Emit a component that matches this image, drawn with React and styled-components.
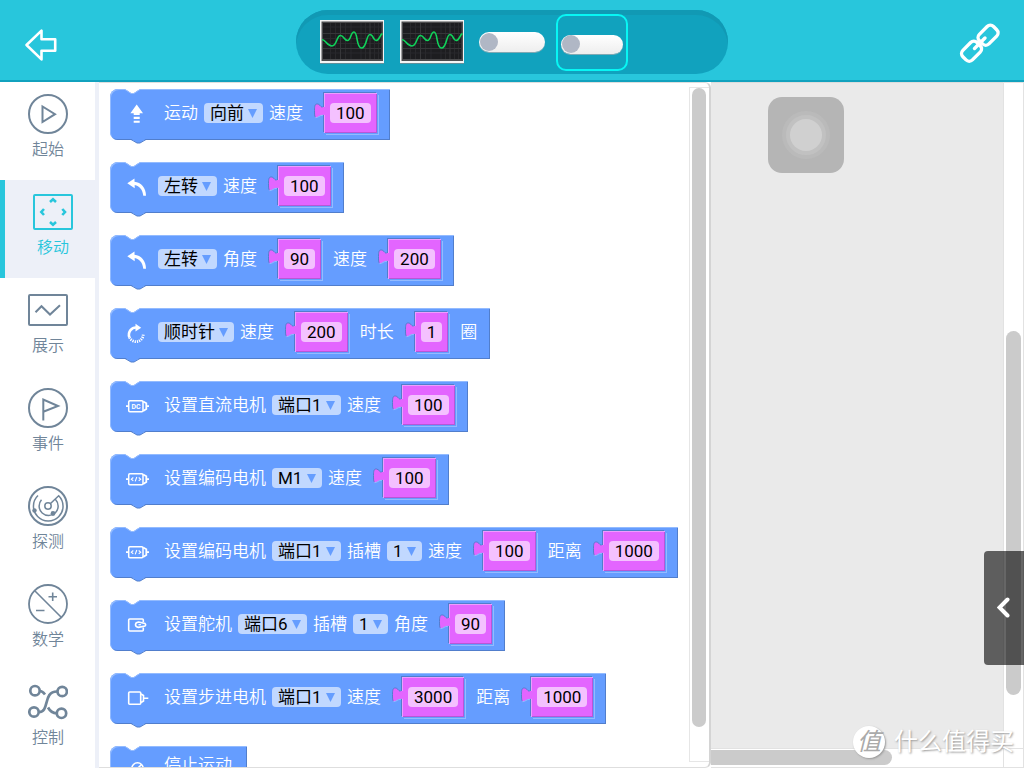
import React, { useState } from 'react';
import styled, { createGlobalStyle } from 'styled-components';

const TEAL = '#28c6dc';
const TEAL_DARK = '#11a2be';
const SLATE = '#708599';
const BLUE = '#659dff';
const BLUE_LIGHT = '#93bbff';
const BLUE_DARK = '#517ecc';
const PINK = '#e365ff';

const CATEGORIES = [
	{ id: 'start', name: '起始', Icon: StartIcon },
	{ id: 'move', name: '移动', Icon: MoveIcon },
	{ id: 'show', name: '展示', Icon: ShowIcon },
	{ id: 'event', name: '事件', Icon: EventIcon },
	{ id: 'detect', name: '探测', Icon: DetectIcon },
	{ id: 'math', name: '数学', Icon: MathIcon },
	{ id: 'control', name: '控制', Icon: ControlIcon },
];

const PORTS = ['端口1', '端口2', '端口3', '端口4', '端口5', '端口6'];
const SLOTS = ['1', '2'];

const text = (value) => ({ type: 'text', value });
const pick = (value, options) => ({ type: 'pick', value, options });
const num = (value) => ({ type: 'num', value });

const BLOCKS = [
	{ Icon: ForwardIcon, parts: [text('运动'), pick('向前', ['向前', '向后']), text('速度'), num('100')] },
	{ Icon: TurnIcon, parts: [pick('左转', ['左转', '右转']), text('速度'), num('100')] },
	{
		Icon: TurnIcon,
		parts: [pick('左转', ['左转', '右转']), text('角度'), num('90'), text('速度'), num('200')],
	},
	{
		Icon: ClockwiseIcon,
		parts: [
			pick('顺时针', ['顺时针', '逆时针']),
			text('速度'),
			num('200'),
			text('时长'),
			num('1'),
			text('圈'),
		],
	},
	{ Icon: DcMotorIcon, parts: [text('设置直流电机'), pick('端口1', PORTS), text('速度'), num('100')] },
	{
		Icon: EncoderIcon,
		parts: [text('设置编码电机'), pick('M1', ['M1', 'M2']), text('速度'), num('100')],
	},
	{
		Icon: EncoderIcon,
		parts: [
			text('设置编码电机'),
			pick('端口1', PORTS),
			text('插槽'),
			pick('1', SLOTS),
			text('速度'),
			num('100'),
			text('距离'),
			num('1000'),
		],
	},
	{
		Icon: ServoIcon,
		parts: [text('设置舵机'), pick('端口6', PORTS), text('插槽'), pick('1', SLOTS), text('角度'), num('90')],
	},
	{
		Icon: StepperIcon,
		parts: [
			text('设置步进电机'),
			pick('端口1', PORTS),
			text('速度'),
			num('3000'),
			text('距离'),
			num('1000'),
		],
	},
	{ Icon: StopIcon, parts: [text('停止运动')] },
];

export default function App() {
	const [active, setActive] = useState('move');

	return (
		<Page>
			<GlobalStyle />
			<Header>
				<BackButton aria-label='返回'>
					<BackIcon />
				</BackButton>
				<Dock>
					<ScreenButton aria-label='示波器 1'>
						<ScopeIcon />
					</ScreenButton>
					<ScreenButton aria-label='示波器 2'>
						<ScopeIcon />
					</ScreenButton>
					<Slot>
						<Toggle type='checkbox' aria-label='开关 1' />
					</Slot>
					<Slot $selected>
						<Toggle type='checkbox' aria-label='开关 2' $small />
					</Slot>
				</Dock>
				<LinkButton aria-label='连接'>
					<LinkIcon />
				</LinkButton>
			</Header>

			<Main>
				<Sidebar>
					{CATEGORIES.map(({ id, name, Icon }) => (
						<Category key={id} $active={id === active} onClick={() => setActive(id)}>
							<CategoryInner>
								<Icon />
								<span>{name}</span>
							</CategoryInner>
						</Category>
					))}
				</Sidebar>

				<Palette>
					<BlockList>
						{BLOCKS.map((block, index) => (
							<Block key={index} {...block} />
						))}
					</BlockList>
					<PaletteTrack $start={0} $size={639} $rest={34}>
						<Thumb />
					</PaletteTrack>
				</Palette>

				<Workspace>
					<Canvas>
						<Joystick>
							<Ring>
								<Knob />
							</Ring>
						</Joystick>
					</Canvas>
					<VerticalTrack $start={248} $size={364} $rest={53}>
						<Thumb />
					</VerticalTrack>
					<HorizontalTrack>
						<WideThumb />
					</HorizontalTrack>
					<Corner />
					<Drawer aria-label='展开'>
						<ChevronIcon />
					</Drawer>
					<Watermark>
						<Badge>值</Badge>
						<span>什么值得买</span>
					</Watermark>
				</Workspace>
			</Main>
		</Page>
	);
}

function Block({ Icon, parts }) {
	return (
		<BlockBody $plain={parts.length === 1}>
			<Notch viewBox='0 0 15 5'>
				<path d='M0 0 L6 4 H9 L15 0 Z' fill='#fff' />
				<path d='M0 0.5 L6 4.5 H9 L15 0.5' fill='none' stroke={BLUE_LIGHT} />
			</Notch>
			<BlockIcon viewBox='0 0 32 30'>
				<Icon />
			</BlockIcon>
			{parts.map((part, index) => {
				if (part.type === 'text') {
					return (
						<Label key={index} $first={index === 0}>
							{part.value}
						</Label>
					);
				}
				if (part.type === 'pick') {
					return <Dropdown key={index} {...part} />;
				}
				return <NumberField key={index} value={part.value} />;
			})}
			<Tab viewBox='0 0 15 5'>
				<path d='M0 0 L6 4 H9 L15 0 Z' fill={BLUE} />
				<path d='M0 0.5 L6 4 H9 L15 0.5' fill='none' stroke={BLUE_DARK} />
			</Tab>
		</BlockBody>
	);
}

function Dropdown({ value, options }) {
	return (
		<Picker>
			<Select defaultValue={value} aria-label={value}>
				{options.map((option) => (
					<option key={option}>{option}</option>
				))}
			</Select>
			<Caret viewBox='0 0 9 9'>
				<path d='M0 0 H9 L4.5 9 Z' fill={BLUE} />
			</Caret>
		</Picker>
	);
}

function NumberField({ value }) {
	const [current, setCurrent] = useState(value);
	return (
		<Socket>
			<Plug viewBox='0 0 12 18'>
				<path
					d='M11 5 C8 6.5 7 2.2 4.500 2 C1.800 1.800 1.500 4 1.500 8.500 C1.500 13 1.500 15.500 3 15.500 C5.500 15.500 6.500 12.800 11 12.800'
					fill={PINK}
				/>
				<path
					d='M10 5 C8 6 7 2.2 4.500 2 C1.800 1.800 1.500 4 1.500 8.500 C1.500 12 1.500 14.500 2.500 15.200'
					fill='none'
					stroke={BLUE_DARK}
				/>
				<path d='M2.500 15.700 C5.500 15.700 6.500 13.200 10 13.200' fill='none' stroke={BLUE_LIGHT} />
				<path d='M9.500 5 H12 V12.800 H9.500 Z' fill={PINK} />
			</Plug>
			<NumberInput
				$chars={current.length}
				value={current}
				aria-label='数值'
				onChange={(e) => setCurrent(e.target.value)}
			/>
		</Socket>
	);
}

/* header icons */

function BackIcon() {
	return (
		<svg width='34' height='34' viewBox='0 0 34 34' fill='none' stroke='#fff' strokeWidth='2.6' strokeLinejoin='round'>
			<path d='M2.5 17 L17.5 2.6 V11.3 H31.2 V22.7 H17.5 V31.4 Z' />
		</svg>
	);
}

function LinkIcon() {
	return (
		<svg width='42' height='42' viewBox='0 0 42 42' fill='none' stroke='#fff' strokeWidth='3.400' strokeLinecap='round'>
			<rect x='20' y='7.500' width='20' height='13.500' rx='4.500' transform='rotate(-45 30 14.200)' />
			<rect x='3.500' y='23.500' width='20' height='13.500' rx='4.500' transform='rotate(-45 13.500 30.200)' />
			<path d='M27 17 L23.500 20.500 M20 24 L16.500 27.500' />
		</svg>
	);
}

function ScopeIcon() {
	return (
		<svg width='64' height='44' viewBox='0 0 64 44'>
			<rect y='1' width='64' height='43' fill='#5f8f9b' />
			<rect width='64' height='43' fill='#f4f4f4' />
			<rect x='1.5' y='1.5' width='61.5' height='39.5' fill='#4c4c4e' />
			<rect x='3' y='3' width='58.5' height='36' fill='#1d1d20' />
			<path
				d='M10.5 3 V39 M15.5 3 V39 M25.5 3 V39 M31 3 V39 M41 3 V39 M45.5 3 V39 M54.5 3 V39 M58.5 3 V39 M3 7 H61 M3 18.5 H61 M3 23.5 H61 M3 33 H61'
				stroke='#29292c'
				fill='none'
			/>
			<path d='M20.5 3 V39 M50 3 V39 M3 13.5 H61 M3 28.5 H61' stroke='#363639' fill='none' />
			<path
				d='M2 19.5 C6 20 7 26 12 26 C17 26 16.5 15.5 20.5 15.5 C24 15.5 24 20.5 27.5 20.5 C31 20.5 30.5 12 34 12 C38 12 36 28 41.5 28 C47 28 46 14.5 50 14.5 C53.500 14.500 53 20.5 56 20.5 C59.500 20.500 59.500 15 62.500 13.500'
				stroke='#10d35a'
				strokeWidth='1.6'
				fill='none'
			/>
		</svg>
	);
}

/* sidebar icons */

function SidebarSvg({ children }) {
	return (
		<svg
			width='40'
			height='40'
			viewBox='0 0 40 40'
			fill='none'
			stroke='currentColor'
			strokeWidth='2'
			aria-hidden='true'
		>
			{children}
		</svg>
	);
}

function StartIcon() {
	return (
		<SidebarSvg>
			<circle cx='20' cy='20' r='19' />
			<path d='M14.5 12.500 V28 L27 20.200 Z' />
		</SidebarSvg>
	);
}

function MoveIcon() {
	return (
		<SidebarSvg>
			<rect x='1' y='3' width='38' height='34' rx='1' />
			<path
				d='M17 10 L20 7.300 L23 10 M17 30 L20 32.700 L23 30 M11 17 L8.300 20 L11 23 M29.300 17 L32 20 L29.300 23'
				strokeWidth='2.600'
			/>
		</SidebarSvg>
	);
}

function ShowIcon() {
	return (
		<SidebarSvg>
			<rect x='1' y='5' width='38' height='30' rx='1' />
			<path d='M7.500 22.300 L13.500 16.200 L22 24.500 L32 15.200' />
		</SidebarSvg>
	);
}

function EventIcon() {
	return (
		<SidebarSvg>
			<circle cx='20' cy='20' r='19' />
			<path d='M15.300 32.500 V11.500 L30 18 L15.300 23.800' />
		</SidebarSvg>
	);
}

function DetectIcon() {
	return (
		<SidebarSvg>
			<circle cx='20' cy='20' r='19' />
			<circle cx='20' cy='20' r='3.200' strokeWidth='1.500' />
			<path
				d='M22.500 17.500 L30.700 9.700 A14.800 14.800 0 1 1 10 9.500 M27.500 13.500 A9.500 9.500 0 1 1 13.500 13.800'
				strokeWidth='1.500'
			/>
			<circle cx='6.500' cy='24.500' r='2.200' fill='currentColor' stroke='none' />
			<circle cx='25' cy='27.500' r='2.400' fill='currentColor' stroke='none' />
		</SidebarSvg>
	);
}

function MathIcon() {
	return (
		<SidebarSvg>
			<circle cx='20' cy='20' r='19' strokeWidth='1.800' />
			<path d='M6.500 6.500 L33.500 33.500 M24.700 8.500 V17 M20.500 12.700 H29 M8 26.500 H16.500' strokeWidth='1.600' />
		</SidebarSvg>
	);
}

function ControlIcon() {
	return (
		<SidebarSvg>
			<g strokeWidth='2.700'>
				<circle cx='7' cy='8.700' r='4.700' />
				<circle cx='34.200' cy='9.500' r='4.700' />
				<circle cx='6' cy='30' r='4.700' />
				<circle cx='33.500' cy='31.300' r='4.700' />
				<path d='M11 30 C22 30 14.500 9.500 29 9.500 M12 9 C14.500 9 15.500 10.500 17 12.500 M20 25.500 C22 29 24 31.300 28.500 31.300' />
			</g>
		</SidebarSvg>
	);
}

/* block icons, all drawn on a 32x30 board */

function ForwardIcon() {
	return (
		<path
			d='M16.700 6.500 L23 15.200 H19.700 V17 H13.700 V15.200 H10.400 Z M13.700 18.700 H19.700 V21 H13.700 Z M13.700 22.700 H19.700 V24.800 H13.700 Z'
			fill='#fff'
		/>
	);
}

function TurnIcon() {
	return (
		<path
			d='M7.300 12.300 L14.500 7.500 V10.700 C21 11.500 26 16.500 26 24.700 H23.300 C22.500 18.500 19.500 15 14.700 14 V17.200 Z'
			fill='#fff'
		/>
	);
}

function ClockwiseIcon() {
	return (
		<g fill='none' stroke='#fff'>
			<path d='M9.500 20.500 A7.200 7.200 0 0 1 17.500 10.600' strokeWidth='2.600' />
			<path d='M9.500 20.500 A7.200 7.200 0 0 0 23.200 17' strokeWidth='2.800' strokeDasharray='1.200 1' />
			<path d='M15.500 6.700 L21.200 10.700 L15.500 14.500 Z' fill='#fff' stroke='none' />
		</g>
	);
}

function MotorShell({ children }) {
	return (
		<g fill='none' stroke='#fff' strokeWidth='1.500'>
			<rect x='8.700' y='10.700' width='14.300' height='11' rx='1.200' />
			<path d='M6 16.200 H8.500 M26.500 16.200 H29 M23.200 11.500 L26.300 13.300 V19 L23.200 21' strokeWidth='1.800' />
			{children}
		</g>
	);
}

function DcMotorIcon() {
	return (
		<MotorShell>
			<text x='16' y='18.700' textAnchor='middle' fontSize='7' fontWeight='700' fill='#fff' stroke='none'>
				DC
			</text>
		</MotorShell>
	);
}

function EncoderIcon() {
	return (
		<MotorShell>
			<path d='M13.300 14.500 L11.300 16.200 L13.300 17.900 M18.700 14.500 L20.700 16.200 L18.700 17.900 M16.800 14 L15.200 18.400' strokeWidth='1.100' />
		</MotorShell>
	);
}

function ServoIcon() {
	return (
		<g fill='none' stroke='#fff' strokeWidth='1.600'>
			<path d='M23.300 13 V11 Q23.300 10 22.300 10 H9.700 Q8.700 10 8.700 11 V21 Q8.700 22 9.700 22 H22.300 Q23.300 22 23.300 21 V18.500' />
			<path d='M18.500 13 L25 14.500 Q26.300 15.800 25 17 L18.500 18.400 Q15.500 18 15.500 15.700 Q15.500 13.400 18.500 13 Z' />
			<path d='M18.500 15.700 H21' strokeWidth='1.200' />
		</g>
	);
}

function StepperIcon() {
	return (
		<g fill='none' stroke='#fff' strokeWidth='1.600'>
			<rect x='8.700' y='10' width='12' height='12.300' rx='1' />
			<path d='M21 12 L23.500 13.500 V19 L21 20.500 M24 16.200 H28.300' />
		</g>
	);
}

function StopIcon() {
	return (
		<g fill='none' stroke='#fff' strokeWidth='1.600'>
			<circle cx='17.500' cy='18.500' r='5.700' />
			<path d='M13.700 22.300 L21.300 14.700' />
		</g>
	);
}

function ChevronIcon() {
	return (
		<svg width='14' height='22' viewBox='0 0 14 22' fill='none' stroke='#fff' strokeWidth='4' strokeLinecap='round'>
			<path d='M10.500 2.500 L2.500 10.500 L10.500 18.500' />
		</svg>
	);
}

const GlobalStyle = createGlobalStyle`
	*,
	*::before,
	*::after {
		box-sizing: border-box;
	}

	body {
		margin: 0;
		background: #fff;
		font-family: Roboto, 'Noto Sans CJK SC', sans-serif;
	}

	button,
	input,
	select {
		font: inherit;
		color: inherit;
		margin: 0;
		padding: 0;
		border: 0;
		background: none;
	}
`;

const Page = styled.div`
	height: 100vh;
	display: flex;
	flex-direction: column;
	overflow: hidden;
`;

const Header = styled.header`
	display: grid;
	grid-template-columns: 1fr minmax(0, 432px) 1fr;
	align-items: center;
	flex: none;
	padding: 10px 24px 6px;
	background: ${TEAL};
	border-bottom: 2px solid ${TEAL_DARK};
`;

const HeaderButton = styled.button`
	display: flex;
	cursor: pointer;
`;

const BackButton = styled(HeaderButton)`
	justify-self: start;
	padding-top: 6px;
`;

const LinkButton = styled(HeaderButton)`
	justify-self: end;
`;

const Dock = styled.div`
	display: flex;
	align-items: center;
	gap: 16px;
	height: 64px;
	padding: 0 24px;
	border-radius: 32px;
	background: ${TEAL_DARK};
	box-shadow: inset 0 5px 0 #1199b4;
`;

const ScreenButton = styled.button`
	display: flex;
	cursor: pointer;
`;

const Slot = styled.span`
	display: flex;
	align-items: center;
	justify-content: center;
	height: 57px;
	width: ${({ $selected }) => ($selected ? '72px' : '64px')};
	margin-left: ${({ $selected }) => ($selected ? '-4px' : '0')};
	padding-top: ${({ $selected }) => ($selected ? '4px' : '0')};
	border: ${({ $selected }) => ($selected ? '2px solid #08f6f4' : '0')};
	border-radius: 10px;
`;

const Toggle = styled.input`
	appearance: none;
	display: flex;
	align-items: center;
	flex: none;
	width: ${({ $small }) => ($small ? '62px' : '66px')};
	height: ${({ $small }) => ($small ? '19px' : '20px')};
	border-radius: 10px;
	background: linear-gradient(#fff, #eee);
	box-shadow: 0 1px 0 #7fa9b4;
	cursor: pointer;

	&::before {
		content: '';
		width: 18px;
		height: 18px;
		margin: 0 1px;
		border-radius: 50%;
		background: #b0b7c5;
	}

	&:checked {
		justify-content: flex-end;
	}
`;

const Main = styled.main`
	flex: 1;
	min-height: 0;
	display: grid;
	grid-template-columns: 99px minmax(0, 612fr) minmax(0, 313fr);
`;

const Sidebar = styled.nav`
	border-right: 4px solid #edf0f8;
	overflow: hidden;
`;

const Category = styled.button`
	display: block;
	width: 100%;
	height: 98px;
	padding: 12px 0 0 28px;
	border-left: ${({ $active }) => ($active ? `5px solid ${TEAL}` : '0')};
	background: ${({ $active }) => ($active ? '#edf0f8' : '#fff')};
	color: ${({ $active }) => ($active ? TEAL : SLATE)};
	font-size: 16px;
	font-weight: 350;
	line-height: 20px;
	cursor: pointer;
`;

const CategoryInner = styled.span`
	display: flex;
	flex-direction: column;
	align-items: center;
	gap: 6px;
	width: 40px;
	height: 86px;
`;

const Palette = styled.section`
	display: flex;
	min-height: 0;
	background: #fff;
	border: 1px solid #dedede;
	border-left: 0;
	border-right: 2px solid #d4d4d4;
	border-radius: 0 6px 6px 0;
`;

const BlockList = styled.div`
	flex: 1;
	min-width: 0;
	display: flex;
	flex-direction: column;
	align-items: flex-start;
	gap: 22px;
	padding: 6px 0 0 11px;
	overflow: hidden;
`;

const BlockBody = styled.div`
	position: relative;
	display: flex;
	align-items: center;
	gap: 6px;
	flex: none;
	padding: ${({ $plain }) => ($plain ? '4px 15px 8px 10px' : '4px 13px 7px 10px')};
	border-radius: 8px 0 0 8px;
	background: ${BLUE};
	box-shadow: inset 1px 1px 0 ${BLUE_LIGHT}, inset -1px -1px 0 ${BLUE_DARK};
	color: #fff;
	font-size: 17px;
	line-height: 20px;
	white-space: nowrap;
`;

const Notch = styled.svg`
	position: absolute;
	left: 15px;
	top: 0;
	width: 15px;
	height: 5px;
`;

const Tab = styled.svg`
	position: absolute;
	left: 15px;
	top: calc(100% - 1px);
	width: 15px;
	height: 5px;
`;

const BlockIcon = styled.svg`
	width: 32px;
	height: 30px;
`;

const Label = styled.span`
	margin-left: ${({ $first }) => ($first ? '6px' : '0')};
	font-weight: 350;
`;

const Picker = styled.span`
	display: inline-grid;
	align-items: center;
	border-radius: 4px;
	background: #c1d8ff;
	color: #000;

	> * {
		grid-area: 1 / 1;
	}
`;

const Select = styled.select`
	appearance: none;
	height: 20px;
	padding: 0 19px 0 6px;
	line-height: 20px;
	cursor: pointer;
`;

const Caret = styled.svg`
	justify-self: end;
	width: 9px;
	height: 9px;
	margin-right: 6px;
	pointer-events: none;
`;

const Socket = styled.span`
	position: relative;
	display: flex;
	margin-left: 15px;
	padding: 10px 6px;
	background: ${PINK};
	box-shadow: inset 1px 1px 0 #ee9dff, inset -1px -1px 0 #b857d6, 1px 1px 0 ${BLUE}, 2px 2px 0 ${BLUE_LIGHT},
		-1px -1px 0 ${BLUE_DARK};

	& + * {
		margin-left: 6px;
	}
`;

const Plug = styled.svg`
	position: absolute;
	left: -11px;
	top: 9px;
	width: 12px;
	height: 18px;
`;

const NumberInput = styled.input`
	width: calc(${({ $chars }) => $chars}ch + 12px);
	height: 20px;
	border-radius: 4px;
	background: #f4c1ff;
	color: #000;
	line-height: 20px;
	text-align: center;
`;

const Track = styled.div`
	display: grid;
	grid-template-rows: ${({ $start, $size, $rest }) => `${$start}fr ${$size}fr ${$rest}fr`};
	background: #fff;
`;

const PaletteTrack = styled(Track)`
	flex: none;
	width: 20px;
	margin: 4px 0 5px;
	padding: 0 3px 0 2px;
	border: 1px solid #e6e6e6;
	border-right: 0;
`;

const VerticalTrack = styled(Track)`
	padding: 0 2px;
	border: 1px solid #e2e2e2;
	border-bottom: 0;
`;

const Thumb = styled.div`
	grid-row: 2;
	border-radius: 8px;
	background: #cbcbcb;
`;

const Workspace = styled.section`
	position: relative;
	display: grid;
	grid-template-columns: minmax(0, 1fr) 21px;
	grid-template-rows: minmax(0, 1fr) 20px;
	background: #fff;
`;

const Canvas = styled.div`
	padding: 14px 57px;
	background: #eaeaea;
	border-top: 1px solid #dcdcdc;
`;

const Joystick = styled.div`
	display: grid;
	place-items: center;
	width: 76px;
	height: 76px;
	border-radius: 14px;
	background: #b5b5b5;
`;

const Ring = styled.div`
	display: grid;
	place-items: center;
	width: 48px;
	height: 48px;
	border: 4px solid #bababa;
	border-radius: 50%;
	background: #c1c1c1;
`;

const Knob = styled.div`
	width: 32px;
	height: 32px;
	border-radius: 50%;
	background: #d0d0d0;
`;

const HorizontalTrack = styled.div`
	padding: 1px 0 2px;
	border-top: 1px solid #e2e2e2;
	border-bottom: 1px solid #e2e2e2;
`;

const WideThumb = styled.div`
	width: 62%;
	height: 15px;
	border-radius: 0 8px 8px 0;
	background: #cbcbcb;
`;

const Corner = styled.div`
	border: 1px solid #e2e2e2;
`;

const Drawer = styled.button`
	position: absolute;
	right: 0;
	bottom: 103px;
	display: grid;
	place-items: center;
	width: 40px;
	height: 114px;
	border-radius: 4px 0 0 4px;
	background: rgba(0, 0, 0, 0.6);
	cursor: pointer;
`;

const Watermark = styled.div`
	position: absolute;
	right: 10px;
	bottom: 10px;
	display: flex;
	align-items: center;
	gap: 9px;
	color: #fff;
	font-size: 24px;
	line-height: 32px;
	white-space: nowrap;
	text-shadow: 1px 1px 2px #999;
`;

const Badge = styled.span`
	width: 32px;
	height: 32px;
	border-radius: 50%;
	background: #fff;
	box-shadow: 1px 1px 2px #999;
	color: #aaa;
	font-size: 24px;
	font-style: italic;
	text-align: center;
	text-shadow: none;
`;
